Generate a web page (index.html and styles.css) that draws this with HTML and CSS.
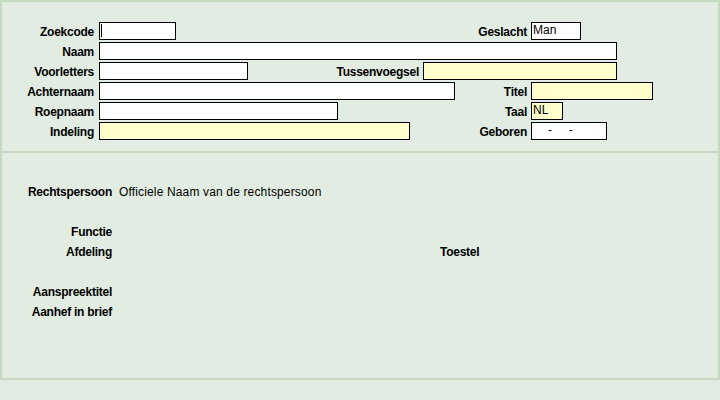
FILE: index.html
```html
<!DOCTYPE html>
<html lang="nl">
<head>
  <meta charset="UTF-8" />
  <title>Persoon</title>
  <link rel="stylesheet" href="styles.css">
</head>
<body>
  <div class="frame">
    <!-- Persoonsgegevens -->
    <div class="section top">
      <div class="row">
        <span class="lbl">Zoekcode</span>
        <div class="field w-zoek"><span class="caret"></span></div>
        <span class="rlbl">Geslacht</span>
        <div class="rcol"><div class="field w-geslacht">Man</div></div>
      </div>
      <div class="row">
        <span class="lbl">Naam</span>
        <div class="field w-naam"></div>
      </div>
      <div class="row">
        <span class="lbl">Voorletters</span>
        <div class="field w-voorl"></div>
        <span class="rlbl">Tussenvoegsel</span>
        <div class="rcol wide"><div class="field yellow w-tussen"></div></div>
      </div>
      <div class="row">
        <span class="lbl">Achternaam</span>
        <div class="field w-achter"></div>
        <span class="rlbl">Titel</span>
        <div class="rcol"><div class="field yellow w-titel"></div></div>
      </div>
      <div class="row">
        <span class="lbl">Roepnaam</span>
        <div class="field w-roep"></div>
        <span class="rlbl">Taal</span>
        <div class="rcol"><div class="field yellow w-taal">NL</div></div>
      </div>
      <div class="row">
        <span class="lbl">Indeling</span>
        <div class="field yellow w-indeling"></div>
        <span class="rlbl">Geboren</span>
        <div class="rcol"><div class="field w-geboren date">-     -</div></div>
      </div>
    </div>

    <!-- Organisatie -->
    <div class="section bottom">
      <div class="line">
        <span class="lbl2">Rechtspersoon</span>
        <span class="value">Officiele Naam van de rechtspersoon</span>
      </div>
      <div class="line empty"></div>
      <div class="line">
        <span class="lbl2">Functie</span>
      </div>
      <div class="line">
        <span class="lbl2">Afdeling</span>
        <span class="spacer"></span>
        <span class="lbl3">Toestel</span>
      </div>
      <div class="line empty"></div>
      <div class="line">
        <span class="lbl2">Aanspreektitel</span>
      </div>
      <div class="line">
        <span class="lbl2">Aanhef in brief</span>
      </div>
    </div>
  </div>
</body>
</html>
```

FILE: styles.css
```css
* {
  box-sizing: border-box;
  margin: 0;
  padding: 0;
}

body {
  background: #e2ece2;
  color: #000;
  font-family: 'Liberation Sans', Arial, sans-serif;
  font-size: 12px;
  width: 720px;
  height: 400px;
  overflow: hidden;
}

/* Kader rond beide secties */
.frame {
  width: 720px;
  height: 380px;
  border: 2px solid #c4d9bf;
}

.section.top {
  height: 151px;
  padding-top: 20px;
  border-bottom: 2px solid #c4d9bf;
}

.section.bottom {
  padding-top: 28px;
}

.row {
  display: flex;
  align-items: center;
  height: 18px;
  margin-bottom: 2px;
}

.lbl {
  width: 97px;
  padding-right: 5px;
  padding-top: 1px;
  text-align: right;
  font-weight: bold;
  letter-spacing: -0.25px;
}

.rlbl {
  flex: 1;
  padding-right: 4px;
  padding-top: 1px;
  text-align: right;
  font-weight: bold;
  letter-spacing: -0.25px;
}

.rcol {
  width: 187px;
}

.rcol.wide {
  width: 295px;
}

/* Invoervelden */
.field {
  height: 18px;
  border: 1px solid #000;
  background: #fff;
  padding-left: 1px;
  line-height: 14px;
  font-size: 12px;
  white-space: pre;
}

.field.yellow {
  background: #ffffcc;
}

.field.date {
  padding-left: 16px;
}

.caret {
  display: inline-block;
  width: 1px;
  height: 13px;
  margin-top: 1px;
  background: #000;
  vertical-align: top;
}

.w-zoek { width: 77px; }
.w-geslacht { width: 50px; }
.w-naam { width: 518px; }
.w-voorl { width: 149px; }
.w-tussen { width: 194px; }
.w-achter { width: 356px; }
.w-titel { width: 122px; }
.w-roep { width: 239px; }
.w-taal { width: 32px; }
.w-indeling { width: 311px; }
.w-geboren { width: 76px; }

/* Onderste sectie */
.line {
  display: flex;
  align-items: center;
  height: 20px;
  padding-top: 1px;
}

.lbl2 {
  width: 110px;
  text-align: right;
  font-weight: bold;
  letter-spacing: -0.25px;
}

.value {
  margin-left: 7px;
  letter-spacing: 0.15px;
}

.spacer {
  width: 328px;
}

.lbl3 {
  font-weight: bold;
  letter-spacing: -0.25px;
}
```
